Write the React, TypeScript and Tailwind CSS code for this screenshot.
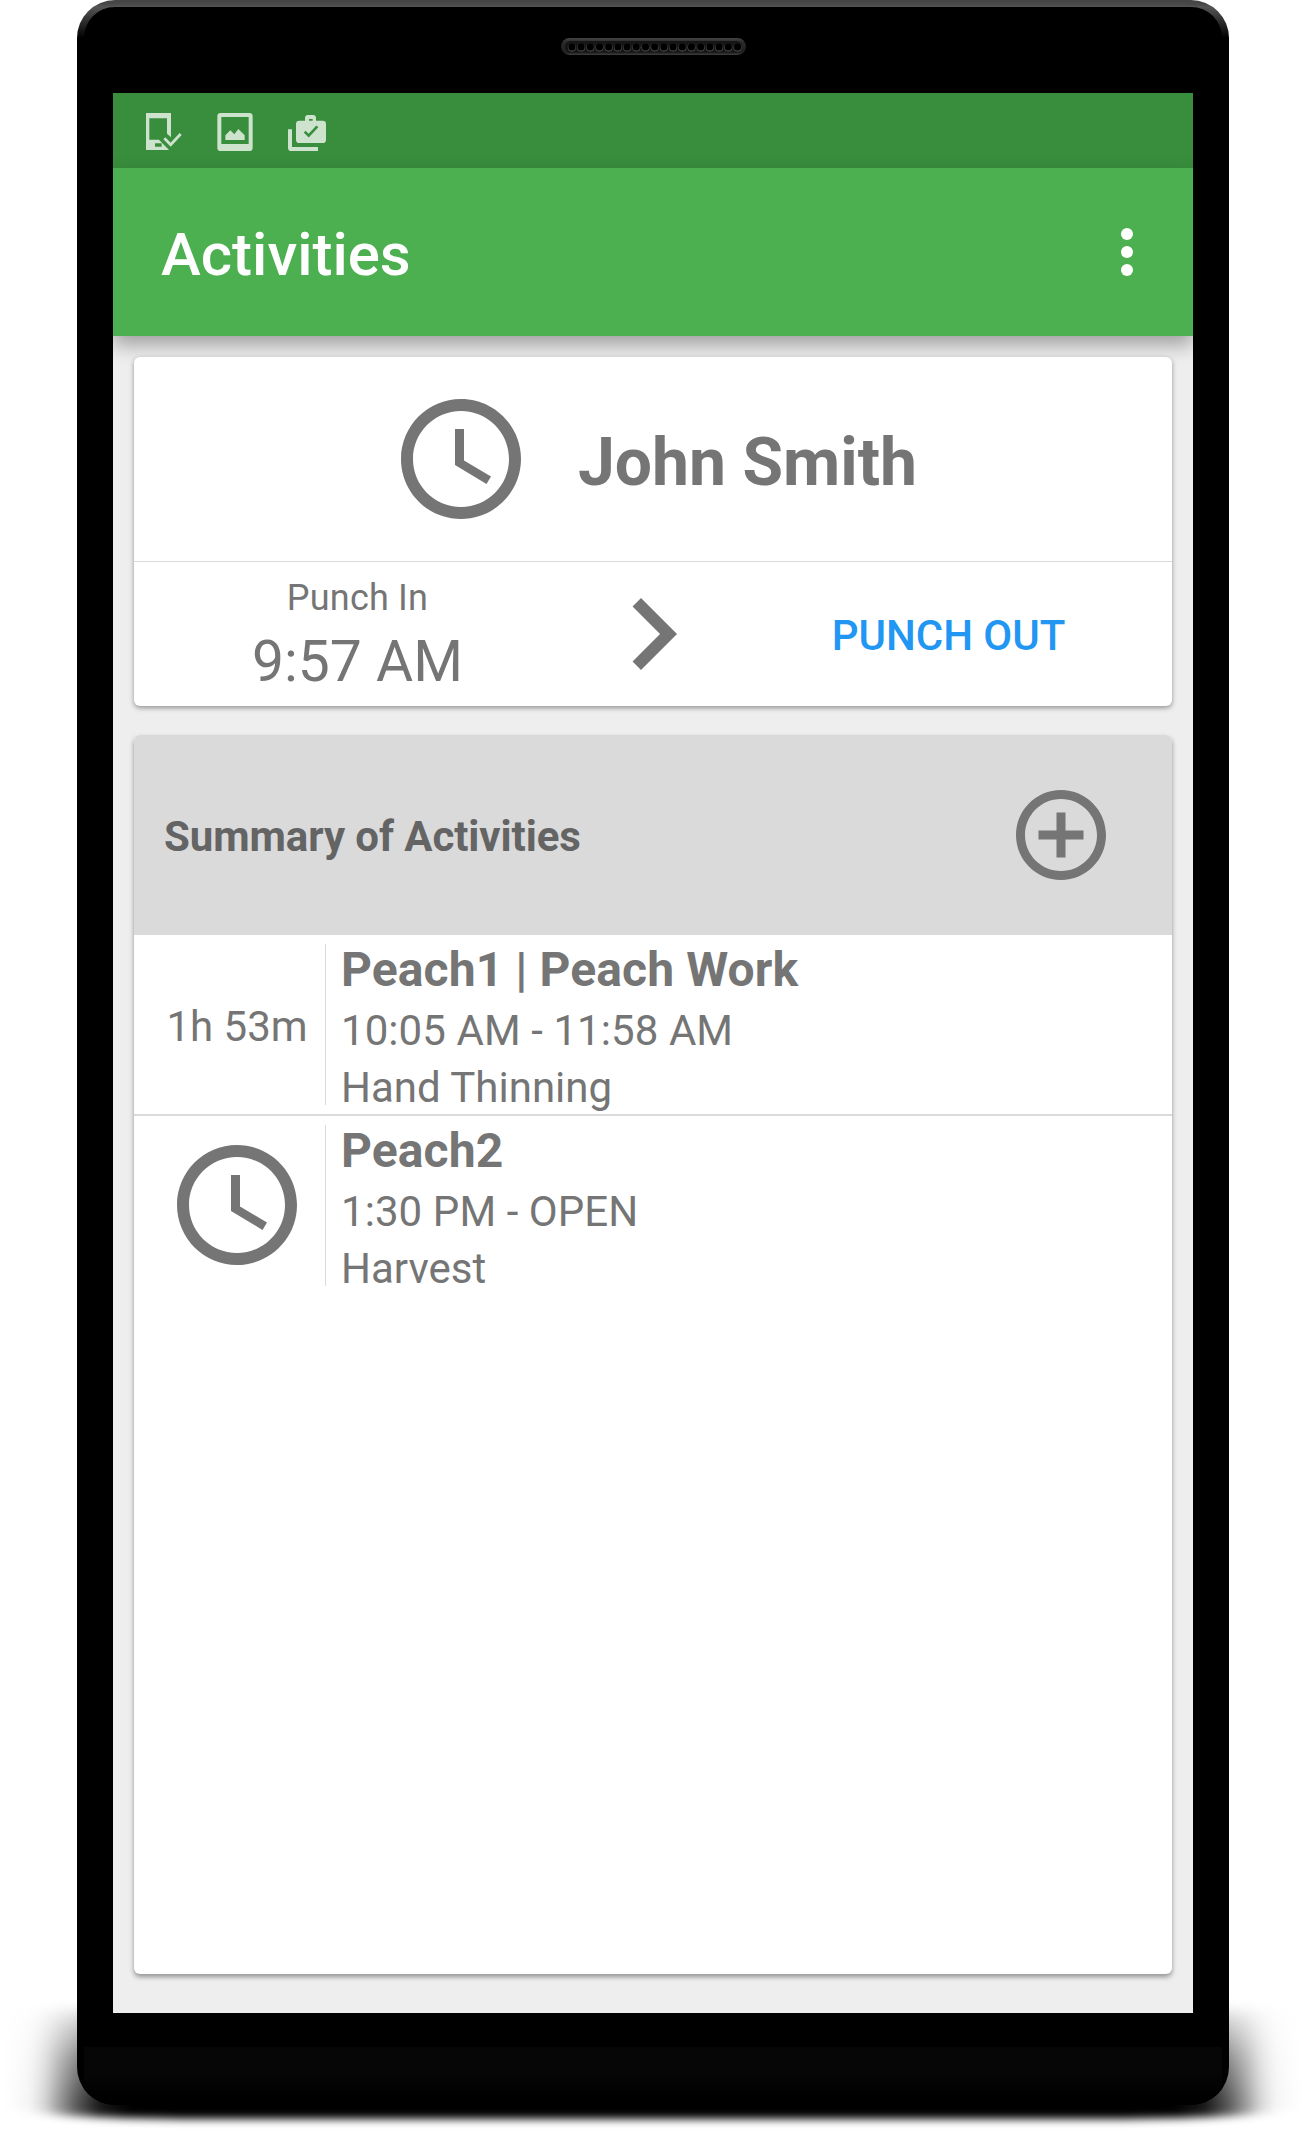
import React from 'react';

interface Activity {
  id: number;
  title: string;
  time: string;
  task: string;
  duration?: string;
}

const ACTIVITIES: Activity[] = [
  { id: 1, title: 'Peach1 | Peach Work', time: '10:05 AM - 11:58 AM', task: 'Hand Thinning', duration: '1h 53m' },
  { id: 2, title: 'Peach2', time: '1:30 PM - OPEN', task: 'Harvest' },
];

const ClockIcon: React.FC = () => (
  <svg viewBox="0 0 24 24" className="w-[144px] h-[144px] shrink-0" fill="currentColor">
    <path d="M11.99 2C6.47 2 2 6.48 2 12s4.47 10 9.99 10C17.52 22 22 17.52 22 12S17.52 2 11.99 2zM12 20c-4.42 0-8-3.58-8-8s3.58-8 8-8 8 3.58 8 8-3.58 8-8 8z" />
    <path d="M12.5 7H11v6l5.25 3.15.75-1.23-4.5-2.67z" />
  </svg>
);

const Speaker: React.FC = () => (
  <svg viewBox="0 0 185 17" className="w-[185px] h-[17px]">
    <defs>
      <linearGradient id="grille" x1="0" y1="0" x2="0" y2="1">
        <stop offset="0" stopColor="#444" />
        <stop offset="0.25" stopColor="#2a2a2a" />
        <stop offset="0.85" stopColor="#202020" />
        <stop offset="1" stopColor="#3e3e3e" />
      </linearGradient>
    </defs>
    <rect width="185" height="17" rx="8.5" fill="url(#grille)" />
    <rect x="4" y="3" width="177" height="11.5" rx="5.5" fill="#161616" />
    {Array.from({ length: 19 }, (_, i) => (
      <g key={i}>
        <circle cx={10.9 + i * 9.2} cy="9.6" r="4" fill="#555" />
        <circle cx={10.9 + i * 9.2} cy="8.9" r="3.6" fill="#000" />
      </g>
    ))}
  </svg>
);

const StatusBar: React.FC = () => (
  <div className="h-[75px] bg-[#388e3c] flex items-start pl-[32px] pt-[19px] text-[#cde3ce]">
    <svg viewBox="255 336 216 120" className="w-[72px] h-[40px]">
      <path fillRule="evenodd" fill="currentColor" d="M258 339H333V412L321 401V355H268V419H297L327 450H258ZM285 430V440H305V430Z" />
      <path d="M313 415L332 434L362 402" fill="none" stroke="currentColor" strokeWidth="8.5" />
    </svg>
    <svg viewBox="471 336 213 120" className="w-[71px] h-[40px]">
      <path fillRule="evenodd" fill="currentColor" d="M482 339H568Q578 339 578 349V443Q578 453 568 453H482Q472 453 472 443V349Q472 339 482 339ZM484 351V432H566V351Z" />
      <path fill="currentColor" d="M496 420V406L511 391L523 403L535 387L554 406V420Z" />
    </svg>
    <svg viewBox="684 336 120 120" className="w-[40px] h-[40px]">
      <path fillRule="evenodd" fill="currentColor" d="M735 362V354Q735 345 744 345H759Q768 345 768 354V362H788Q798 362 798 372V419Q798 429 788 429H718Q708 429 708 419V372Q708 362 718 362ZM747 357V362H758V357Z" />
      <path fill="currentColor" d="M684 388H696V441H774V453H694Q684 453 684 443Z" />
      <path d="M734 395L746 407L772 379" fill="none" stroke="#388e3c" strokeWidth="8" />
    </svg>
  </div>
);

const Toolbar: React.FC = () => (
  <div className="h-[168px] bg-[#4caf50] flex items-center justify-between pl-[48px] pr-[60px] text-white shadow-[0_9px_18px_rgba(0,0,0,0.33)]">
    <h1 className="text-[60px] leading-[70px] font-medium pt-[5px]">Activities</h1>
    <button className="flex flex-col gap-[6px]" aria-label="More options">
      <span className="size-[12px] rounded-full bg-white" />
      <span className="size-[12px] rounded-full bg-white" />
      <span className="size-[12px] rounded-full bg-white" />
    </button>
  </div>
);

const PunchCard: React.FC = () => (
  <div className="h-[349px] bg-white rounded-[6px] shadow-[0_2px_5px_rgba(0,0,0,0.38)]">
    <div className="h-[204px] flex items-center pl-[255px]">
      <ClockIcon />
      <h2 className="text-[66px] leading-[78px] font-bold ml-[45px] pt-[7px]">John Smith</h2>
    </div>
    <div className="h-[145px] border-t border-[#dadada] flex">
      <div className="w-[447px] flex flex-col items-center pt-[15px]">
        <span className="text-[36px] leading-[42px] tracking-[0.2px]">Punch In</span>
        <span className="text-[57px] leading-[66px] mt-[10px]">9:57 AM</span>
      </div>
      <svg viewBox="0 0 24 24" className="w-[144px] h-[144px]" fill="currentColor">
        <path d="M10 6L8.59 7.41 13.17 12l-4.58 4.59L10 18l6-6z" />
      </svg>
      <button className="flex-1 text-[42px] leading-[50px] font-medium text-[#2196f3] pt-[4px]">PUNCH OUT</button>
    </div>
  </div>
);

const ActivityRow: React.FC<{ activity: Activity }> = ({ activity }) => (
  <div className="h-[179px] flex items-center">
    <div className="w-[191px] pl-[15px] flex justify-center">
      {activity.duration ? (
        <span className="text-[42px] leading-[50px] whitespace-nowrap pt-[4px]">{activity.duration}</span>
      ) : (
        <div className="pb-[2px]">
          <ClockIcon />
        </div>
      )}
    </div>
    <div className="w-px h-[161px] bg-[#dadada]" />
    <div className="h-[179px] pl-[15px] pt-[2px] flex flex-col text-[42px] leading-[57px]">
      <h3 className="text-[48px] leading-[65px] font-bold tracking-[0.1px]">{activity.title}</h3>
      <p className="tracking-[0.08px]">{activity.time}</p>
      <p>{activity.task}</p>
    </div>
  </div>
);

const SummaryCard: React.FC = () => (
  <div className="h-[1239px] bg-white rounded-[6px] shadow-[0_3px_5px_rgba(0,0,0,0.38)]">
    <div className="h-[200px] bg-[#dadada] rounded-t-[6px] flex items-center justify-between pl-[30px] pr-[57px]">
      <h2 className="text-[42px] leading-[50px] font-bold tracking-[-0.08px] text-[#646464] pt-[3px]">Summary of Activities</h2>
      <svg viewBox="0 0 24 24" className="w-[108px] h-[108px]" fill="currentColor">
        <path d="M13 7h-2v4H7v2h4v4h2v-4h4v-2h-4V7zm-1-5C6.48 2 2 6.48 2 12s4.48 10 10 10 10-4.48 10-10S17.52 2 12 2zm0 18c-4.41 0-8-3.59-8-8s3.59-8 8-8 8 3.59 8 8-3.59 8-8 8z" />
      </svg>
    </div>
    <div className="divide-y-2 divide-[#dadada]">
      {ACTIVITIES.map((a) => (
        <div key={a.id}>
          <ActivityRow activity={a} />
        </div>
      ))}
    </div>
  </div>
);

const App: React.FC = () => {
  return (
    <div className="relative w-[1305px] h-[2130px] bg-white overflow-hidden pl-[77px] font-['Roboto',sans-serif] text-[#757575]">
      {/* Floor shadow under the phone */}
      <div className="absolute inset-x-0 top-[2004px] h-[115px] blur-[4px]">
        <div className="h-full rounded-b-[200px_14px] [border-bottom-left-radius:200px_14px] [border-bottom-right-radius:200px_14px] [mask-image:linear-gradient(to_bottom,transparent_0,rgba(0,0,0,0.25)_16px,rgba(0,0,0,0.7)_56px,black_96px)] bg-[linear-gradient(to_right,transparent_5px,rgba(0,0,0,0.04)_30px,rgba(0,0,0,0.16)_45px,rgba(0,0,0,0.4)_60px,rgba(0,0,0,0.65)_77px,rgba(0,0,0,0.9)_100px,black_130px,black_1175px,rgba(0,0,0,0.9)_1205px,rgba(0,0,0,0.65)_1228px,rgba(0,0,0,0.4)_1245px,rgba(0,0,0,0.16)_1260px,rgba(0,0,0,0.04)_1275px,transparent_1300px)]" />
      </div>

      {/* Phone body */}
      <div className="relative w-[1152px] h-[2105px] rounded-[38px] overflow-hidden pt-[7px] bg-[linear-gradient(to_bottom,#444_0,#484848_4px,#555_7px,#000_38px)]">
        <div className="mx-[7px] h-[2098px] rounded-t-[31px] bg-black">
          <div className="h-[86px] flex justify-center pt-[31px]">
            <Speaker />
          </div>
          <div className="mx-[29px] h-[1920px] bg-[#eeeeee] overflow-hidden">
            <StatusBar />
            <Toolbar />
            <div className="px-[21px] pt-[21px] flex flex-col gap-[29px]">
              <PunchCard />
              <SummaryCard />
            </div>
          </div>
          <div className="h-[34px]" />
          <div className="h-[58px] bg-[linear-gradient(to_bottom,#060606_0,#060606_25px,#000_50px)]" />
        </div>
      </div>
    </div>
  );
};

export default App;
